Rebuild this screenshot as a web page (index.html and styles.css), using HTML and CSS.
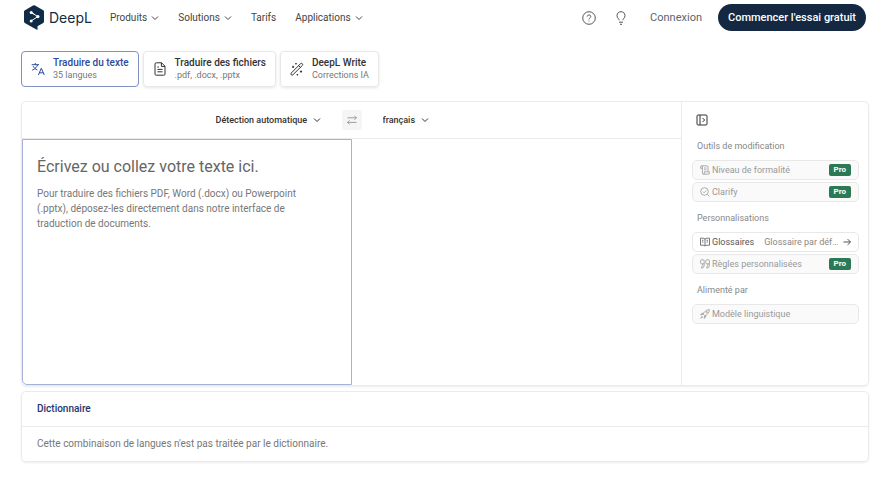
FILE: index.html
```html
<!DOCTYPE html>
<html lang="fr">
<head>
    <meta charset="UTF-8">
    <meta name="viewport" content="width=device-width, initial-scale=1.0">
    <title>DeepL Traduction</title>
    <link rel="stylesheet" href="styles.css">
</head>
<body>
    <svg class="sprite" aria-hidden="true">
        <symbol id="chevron" viewBox="0 0 8 8"><path d="M1 2.5 4 5.5 7 2.5"/></symbol>
    </svg>

    <header class="header">
        <a class="logo" href="#">
            <svg class="logo-mark" viewBox="0 0 20 25" aria-hidden="true">
                <path class="logo-shape" d="M0.6 5.4 9 0.4Q10 -0.1 11 0.4L19.2 5.2Q20 5.7 20 6.6V16.6Q20 17.5 19.2 18L13.5 21.3V25L8.8 22.4 0.8 18Q0 17.5 0 16.6V6.6Q0 5.8 0.6 5.4Z"/>
                <path class="logo-line" d="M7.2 7.4 13.8 11.6 7.2 15.9M8 7.8 11 9.8"/>
                <circle cx="7.2" cy="7.4" r="1.5"/>
                <circle cx="13.9" cy="11.6" r="1.6"/>
                <circle cx="7.2" cy="15.9" r="1.5"/>
            </svg>
            <span>DeepL</span>
        </a>
        <nav class="nav">
            <button type="button">Produits <svg class="chevron"><use href="#chevron"/></svg></button>
            <button type="button">Solutions <svg class="chevron"><use href="#chevron"/></svg></button>
            <a href="#">Tarifs</a>
            <button type="button">Applications <svg class="chevron"><use href="#chevron"/></svg></button>
        </nav>
        <div class="account">
            <button type="button" class="icon-button" aria-label="Aide">
                <svg class="icon-large" viewBox="0 0 14 14"><circle cx="7" cy="7" r="6.3"/><path d="M5.2 5.6C5.2 3.4 8.8 3.4 8.8 5.5 8.8 6.9 7 6.8 7 8.3M7 9.6V10.4"/></svg>
            </button>
            <button type="button" class="icon-button" aria-label="Nouveautés">
                <svg class="icon-large" viewBox="0 0 14 14"><path d="M5.2 9.2C5.2 7.6 3 7.2 3 4.6 3 2.2 4.8.7 7 .7s4 1.5 4 3.9c0 2.6-2.2 3-2.2 4.6M5 11.2H9M6 13.3H8"/></svg>
            </button>
            <a class="login" href="#">Connexion</a>
            <button type="button" class="trial">Commencer l'essai gratuit</button>
        </div>
    </header>

    <main class="main">
        <div class="tabs">
            <button type="button" class="tab tab-active">
                <svg class="icon-large" viewBox="0 0 14 14"><path d="M.7 2.7H8M4.3 1V2.7M6.6 2.7C6 5 4 7 1.2 8.2M2.2 4.2C3 6 4.6 7.3 6.3 8M7.4 13 10.3 6.2 13.3 13M8.4 10.8H12.3"/></svg>
                <span class="tab-text"><span class="tab-title">Traduire du texte</span><span class="tab-note">35 langues</span></span>
            </button>
            <button type="button" class="tab">
                <svg class="icon-large" viewBox="0 0 14 14"><path d="M3.4.8H8.6L12 4.2V12Q12 13.2 10.8 13.2H3.2Q2 13.2 2 12V2Q2 .8 3.4.8ZM8.4.8V4.4H12M4.4 5H6M4.4 7.4H9.6M4.4 9.8H9.6"/></svg>
                <span class="tab-text"><span class="tab-title">Traduire des fichiers</span><span class="tab-note">.pdf, .docx, .pptx</span></span>
            </button>
            <button type="button" class="tab">
                <svg class="icon-large" viewBox="0 0 14 14"><path d="M1.2 11.1 10.6 1.6Q11.5.9 12.3 1.7 13.1 2.5 12.4 3.4L2.9 12.8Q2 13.5 1.2 12.7.5 12 1.2 11.1ZM8.6 3.6 10.4 5.4M3.1 3.8V6M2 4.9H4.2M11 8.5V10.7M9.9 9.6H12.1M6 1V2.4M5.3 1.7H6.7M7.4 12V13.4M6.7 12.7H8.1"/></svg>
                <span class="tab-text"><span class="tab-title">DeepL Write</span><span class="tab-note">Corrections IA</span></span>
            </button>
        </div>

        <section class="card translator">
            <div class="workspace">
                <div class="languages">
                    <div class="language language-source">
                        <select aria-label="Langue source"><option>Détection automatique</option></select>
                        <svg class="chevron"><use href="#chevron"/></svg>
                    </div>
                    <button type="button" class="swap" aria-label="Inverser les langues">
                        <svg class="icon" viewBox="0 0 10 10"><path d="M.5 2.8H9.4M7.4.8 9.4 2.8 7.4 4.8M9.5 7.4H.6M2.6 5.4.6 7.4 2.6 9.4"/></svg>
                    </button>
                    <div class="language">
                        <select aria-label="Langue cible"><option>français</option></select>
                        <svg class="chevron"><use href="#chevron"/></svg>
                    </div>
                </div>
                <div class="panes">
                    <div class="source">
                        <textarea id="sourceText"></textarea>
                        <label class="hint" for="sourceText">
                            <span class="hint-title">Écrivez ou collez votre texte ici.</span>
                            <span class="hint-text">Pour traduire des fichiers PDF, Word (.docx) ou Powerpoint (.pptx), déposez-les directement dans notre interface de traduction de documents.</span>
                        </label>
                    </div>
                    <div class="target"></div>
                </div>
            </div>

            <aside class="sidebar">
                <button type="button" class="collapse" aria-label="Réduire le panneau">
                    <svg class="icon-panel" viewBox="0 0 12 12"><rect x="1" y="1" width="10" height="10" rx="1"/><path d="M4 1V11M6.6 4 8.6 6 6.6 8"/></svg>
                </button>
                <h2>Outils de modification</h2>
                <div class="tools">
                    <button type="button" class="tool">
                        <svg class="icon" viewBox="0 0 10 10"><path d="M2.4 3.3H.6V1.8Q.6.8 1.6.8H7Q8 .8 8 1.8V6.6M1.6.8Q2.4.8 2.4 1.8V8.2Q2.4 9.2 3.4 9.2H8.4Q9.4 9.2 9.4 8.2V6.8H4.4V8.2Q4.4 9.2 3.4 9.2M4 3H6.4M4 4.8H6.4"/></svg>
                        <span>Niveau de formalité</span><span class="pro">Pro</span>
                    </button>
                    <button type="button" class="tool">
                        <svg class="icon" viewBox="0 0 10 10"><circle cx="4.5" cy="4.5" r="3.8"/><path d="M7.3 7.3 9.5 9.5M2.9 4.6 4.1 5.8 6.3 3.5"/></svg>
                        <span>Clarify</span><span class="pro">Pro</span>
                    </button>
                </div>
                <h2>Personnalisations</h2>
                <div class="tools">
                    <button type="button" class="tool tool-enabled">
                        <svg class="icon" viewBox="0 0 10 10"><path d="M5 2Q4 1.2 2.8 1.2H.5V8.2H3Q4.4 8.2 5 9.2 5.6 8.2 7 8.2H9.5V1.2H7.2Q6 1.2 5 2ZM5 2V9M2 3.3H3.4M2 5H3.4M6.6 3.3H8M6.6 5H8"/></svg>
                        <span>Glossaires</span>
                        <span class="tool-value">Glossaire par déf…</span>
                        <svg class="chevron" viewBox="0 0 8 8"><path d="M.5 4H7.5M4.6 1.1 7.5 4 4.6 6.9"/></svg>
                    </button>
                    <button type="button" class="tool">
                        <svg class="icon" viewBox="0 0 10 10"><path d="M4.2 4.8H1.5Q.6 4.8.6 3.9V1.7Q.6.8 1.5.8H3.3Q4.2.8 4.2 1.7V6.5Q4.2 8.8 1.6 9.2V7.6Q2.7 7.4 2.7 6.4V4.8M9.4 4.8H6.7Q5.8 4.8 5.8 3.9V1.7Q5.8.8 6.7.8H8.5Q9.4.8 9.4 1.7V6.5Q9.4 8.8 6.8 9.2V7.6Q7.9 7.4 7.9 6.4V4.8"/></svg>
                        <span>Règles personnalisées</span><span class="pro">Pro</span>
                    </button>
                </div>
                <h2>Alimenté par</h2>
                <div class="tools">
                    <button type="button" class="tool">
                        <svg class="icon" viewBox="0 0 10 10"><path d="M3.2 5.2Q5 .8 9.4.6 9.2 5 4.8 6.8ZM3.6 4.3H1.8L.6 6 3.2 5.2M5.7 6.4V8.2L4 9.4 4.8 6.8M2.3 7.1.7 9.3 2.9 7.7"/><circle cx="6.8" cy="3.2" r=".7"/></svg>
                        <span>Modèle linguistique</span>
                    </button>
                </div>
            </aside>
        </section>

        <section class="card dictionary">
            <h2>Dictionnaire</h2>
            <p>Cette combinaison de langues n'est pas traitée par le dictionnaire.</p>
        </section>
    </main>
</body>
</html>
```
FILE: styles.css
```css
* {
    box-sizing: border-box;
}
body {
    margin: 0;
    font-family: Roboto, "Liberation Sans", sans-serif;
    font-size: 10px;
    line-height: 12px;
    color: #333;
    background-color: #fff;
}
button,
select,
textarea {
    margin: 0;
    padding: 0;
    border: 0;
    font: inherit;
    color: inherit;
    background: none;
}
a {
    color: inherit;
    text-decoration: none;
}
h2,
p {
    margin: 0;
    font-size: 10px;
    font-weight: 400;
}
svg {
    flex: none;
    fill: none;
    stroke: currentColor;
    stroke-width: 1;
}
.sprite {
    display: none;
}
.chevron {
    width: 8px;
    height: 8px;
}
.icon {
    width: 10px;
    height: 10px;
    stroke-width: 0.8;
}
.icon-panel {
    width: 12px;
    height: 12px;
}
.icon-large {
    width: 14px;
    height: 14px;
}

/* header */
.header {
    display: flex;
    align-items: center;
    height: 35px;
    padding: 0 24px;
}
.logo {
    display: flex;
    align-items: center;
    gap: 5px;
    color: #0f2b46;
    font-family: Inter, sans-serif;
    font-size: 14px;
}
.logo-mark {
    width: 20px;
    height: 25px;
}
.logo-shape {
    fill: #0f2b46;
    stroke: none;
}
.logo-line {
    stroke: #fff;
}
.logo-mark circle {
    fill: #fff;
    stroke: none;
}
.nav {
    display: flex;
    gap: 19px;
    margin-left: 18px;
    color: #444;
}
.nav button {
    display: flex;
    align-items: center;
    gap: 4px;
}
.account {
    display: flex;
    align-items: center;
    margin-left: auto;
    color: #555;
}
.icon-button {
    display: flex;
    margin-right: 18px;
}
.login {
    margin: 0 16px 0 4px;
    color: #5a6570;
    font-size: 11px;
}
.trial {
    height: 27px;
    padding: 0 10px;
    border-radius: 14px;
    color: #fff;
    background-color: #142842;
    font-size: 11px;
    font-weight: 500;
}

/* tabs */
.main {
    padding: 16px 21px;
}
.tabs {
    display: flex;
    gap: 4px;
}
.tab {
    display: flex;
    align-items: center;
    gap: 8px;
    height: 36px;
    padding: 0 9px;
    border: 1px solid #e8e8e8;
    border-radius: 4px;
    box-shadow: 0 1px 3px rgba(0, 0, 0, 0.1);
    text-align: left;
}
.tab-active {
    border-color: #8291c4;
    box-shadow: none;
    color: #2c4a9e;
}
.tab-text {
    display: flex;
    flex-direction: column;
}
.tab-title {
    font-weight: 500;
}
.tab-note {
    color: #777;
    font-size: 9px;
}

/* translator */
.card {
    border: 1px solid #ebebeb;
    border-radius: 5px;
    box-shadow: 0 1px 2px rgba(0, 0, 0, 0.08);
}
.translator {
    display: flex;
    min-height: 285px;
    margin-top: 14px;
}
.workspace {
    display: flex;
    flex: 1;
    flex-direction: column;
}
.languages {
    display: grid;
    grid-template-columns: 1fr 20px 1fr;
    gap: 21px;
    align-items: center;
    height: 37px;
    border-bottom: 1px solid #ebebeb;
    font-size: 9px;
    font-weight: 500;
}
.language {
    display: flex;
    align-items: center;
    gap: 5px;
}
.language-source {
    justify-content: flex-end;
}
.language select {
    appearance: none;
}
.swap {
    display: grid;
    place-items: center;
    height: 20px;
    border-radius: 3px;
    color: #888;
    background-color: #f5f5f5;
}
.panes {
    display: grid;
    flex: 1;
    grid-template-columns: 1fr 1fr;
}
.source {
    display: grid;
    border: 1px solid #a4b2d8;
    border-bottom-left-radius: 5px;
}
.source textarea,
.hint {
    grid-area: 1 / 1;
}
.source textarea {
    width: 100%;
    padding: 15px;
    outline: 0;
    resize: none;
}
.hint {
    display: flex;
    flex-direction: column;
    gap: 9px;
    padding: 17px 48px 0 14px;
    color: #777;
    pointer-events: none;
}
.hint-title {
    color: #666;
    font-size: 16px;
    line-height: 20px;
}
.hint-text {
    line-height: 15px;
}

/* sidebar */
.sidebar {
    width: 187px;
    padding: 12px 9px 12px 10px;
    border-left: 1px solid #ebebeb;
}
.collapse {
    display: flex;
    margin: 0 4px 14px;
}
.sidebar h2 {
    margin: 0 5px 8px;
    color: #888;
    font-size: 9px;
}
.tools {
    display: flex;
    flex-direction: column;
    gap: 2px;
    margin-bottom: 10px;
}
.tool {
    display: flex;
    align-items: center;
    gap: 2px;
    height: 20px;
    padding: 0 7px;
    border: 1px solid #e8e8e8;
    border-radius: 5px;
    color: #999;
    background-color: #fafafa;
    font-size: 9px;
    text-align: left;
    white-space: nowrap;
}
.tool-enabled {
    color: #555;
    background-color: #fff;
}
.tool-value {
    margin: 0 auto 0 8px;
    color: #888;
}
.pro {
    margin-left: auto;
    padding: 0 5px;
    border-radius: 2px;
    color: #fff;
    background-color: #2b7a55;
    font-size: 8px;
    font-weight: 700;
}

/* dictionary */
.dictionary {
    margin-top: 5px;
}
.dictionary h2,
.dictionary p {
    padding: 11px 15px;
}
.dictionary h2 {
    border-bottom: 1px solid #ebebeb;
    color: #26346c;
    font-weight: 500;
}
.dictionary p {
    color: #777;
}
```
